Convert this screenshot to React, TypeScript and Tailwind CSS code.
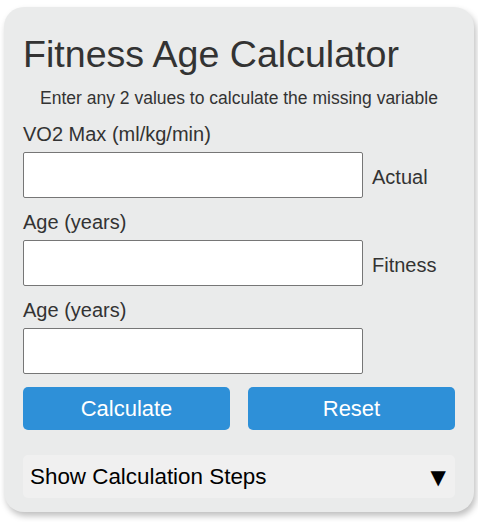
import { useState } from 'react';

const font = { fontFamily: '"Liberation Sans", Arial, sans-serif' };

function Field({ label, side }: { label: string; side?: string }) {
    const [value, setValue] = useState('');
    return (
        <div>
            <label className="block text-[20px] leading-[23px] text-[#333]">{label}</label>
            <div className="flex items-center mt-[6px]">
                <input
                    type="text"
                    value={value}
                    onChange={(e) => setValue(e.target.value)}
                    className="w-[340px] h-[46px] bg-white border border-[#767676] rounded-[2px] px-2 text-[20px] outline-none"
                />
                {side && <span className="ml-[9px] pt-[4px] text-[20px] leading-[23px] text-[#333]">{side}</span>}
            </div>
        </div>
    );
}

export default function App() {
    const [open, setOpen] = useState(false);

    return (
        <div className="w-[478px] h-[522px] bg-white pt-[7px] pl-[4px]" style={font}>
            <div className="w-[470px] rounded-[20px] bg-[#eaebeb] px-[19px] pt-[26px] pb-[14px] shadow-[2px_4px_6px_rgba(0,0,0,0.25)]">
                <h1 className="text-[37.6px] leading-[42px] text-[#333] font-normal">Fitness Age Calculator</h1>
                <p className="mt-[13px] text-center text-[17.5px] leading-[20px] text-[#333]">
                    Enter any 2 values to calculate the missing variable
                </p>

                <div className="mt-[15px] flex flex-col gap-[13px]">
                    <Field label="VO2 Max (ml/kg/min)" side="Actual" />
                    <Field label="Age (years)" side="Fitness" />
                    <Field label="Age (years)" />
                </div>

                <div className="mt-[13px] flex gap-[18px]">
                    <button className="flex-1 h-[43px] rounded-[5px] bg-[#2e90d8] text-white text-[22px]">
                        Calculate
                    </button>
                    <button className="flex-1 h-[43px] rounded-[5px] bg-[#2e90d8] text-white text-[22px]">
                        Reset
                    </button>
                </div>

                <button
                    onClick={() => setOpen(!open)}
                    className="mt-[25px] w-full h-[43px] rounded-[5px] bg-[#f0f0f0] flex items-center justify-between pl-[7px] pr-[9px] text-[22.4px] text-black"
                >
                    <span>Show Calculation Steps</span>
                    <span style={{ fontFamily: '"DejaVu Sans", sans-serif' }} className="text-[20px]">▼</span>
                </button>
            </div>
        </div>
    );
}
